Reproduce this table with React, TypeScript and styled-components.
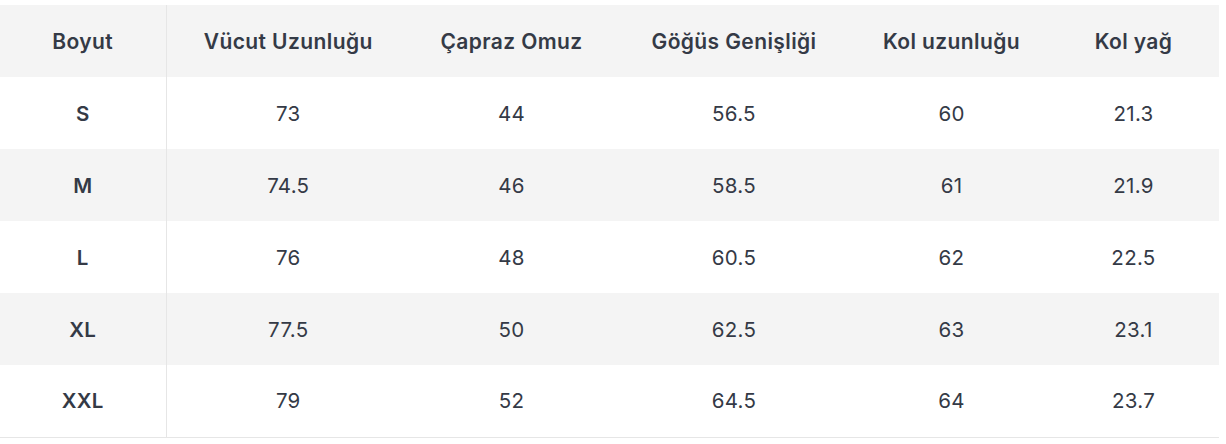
import React from "react";
import styled, { createGlobalStyle } from "styled-components";

interface SizeRow {
  size: string;
  values: string[];
}

const headers = [
  "Boyut",
  "Vücut Uzunluğu",
  "Çapraz Omuz",
  "Göğüs Genişliği",
  "Kol uzunluğu",
  "Kol yağ",
];

const colWidths = [166, 244, 203, 242, 193, 171];

const rows: SizeRow[] = [
  { size: "S", values: ["73", "44", "56.5", "60", "21.3"] },
  { size: "M", values: ["74.5", "46", "58.5", "61", "21.9"] },
  { size: "L", values: ["76", "48", "60.5", "62", "22.5"] },
  { size: "XL", values: ["77.5", "50", "62.5", "63", "23.1"] },
  { size: "XXL", values: ["79", "52", "64.5", "64", "23.7"] },
];

const GlobalStyle = createGlobalStyle`
  body {
    margin: 0;
    background: #ffffff;
    font-family: Inter, "Liberation Sans", sans-serif;
    color: #343a46;
  }
`;

const App: React.FC = () => {
  return (
    <>
      <GlobalStyle />
      <Wrapper>
        <SizeTable>
          <colgroup>
            {colWidths.map((w, idx) => (
              <col key={idx} style={{ width: w }} />
            ))}
          </colgroup>
          <thead>
            <Row $striped>
              {headers.map((h, idx) => (
                <HeadCell key={idx} $first={idx === 0}>
                  {h}
                </HeadCell>
              ))}
            </Row>
          </thead>
          <tbody>
            {rows.map((row, idx) => (
              <Row key={row.size} $striped={idx % 2 === 1}>
                <SizeCell>{row.size}</SizeCell>
                {row.values.map((v, i) => (
                  <Cell key={i}>{v}</Cell>
                ))}
              </Row>
            ))}
          </tbody>
        </SizeTable>
      </Wrapper>
    </>
  );
};
export default App;

const Wrapper = styled.div`
  padding-top: 5px;
  width: 1219px;
`;

const SizeTable = styled.table`
  width: 1219px;
  border-collapse: collapse;
  table-layout: fixed;
  border-bottom: 1px solid #e6e6e6;
`;

const Row = styled.tr<{ $striped?: boolean }>`
  height: 72px;
  background: ${(p) => (p.$striped ? "#f4f4f4" : "#ffffff")};
`;

const HeadCell = styled.th<{ $first?: boolean }>`
  padding: 0;
  text-align: center;
  font-size: 21px;
  font-weight: 600;
  letter-spacing: 0.4px;
  color: #343a46;
  border-right: ${(p) => (p.$first ? "1px solid #e6e6e6" : "none")};
`;

const Cell = styled.td`
  padding: 0;
  text-align: center;
  font-size: 20.5px;
  font-weight: 400;
  letter-spacing: 0.3px;
  color: #343a46;
`;

const SizeCell = styled(Cell)`
  font-weight: 600;
  border-right: 1px solid #e6e6e6;
`;
